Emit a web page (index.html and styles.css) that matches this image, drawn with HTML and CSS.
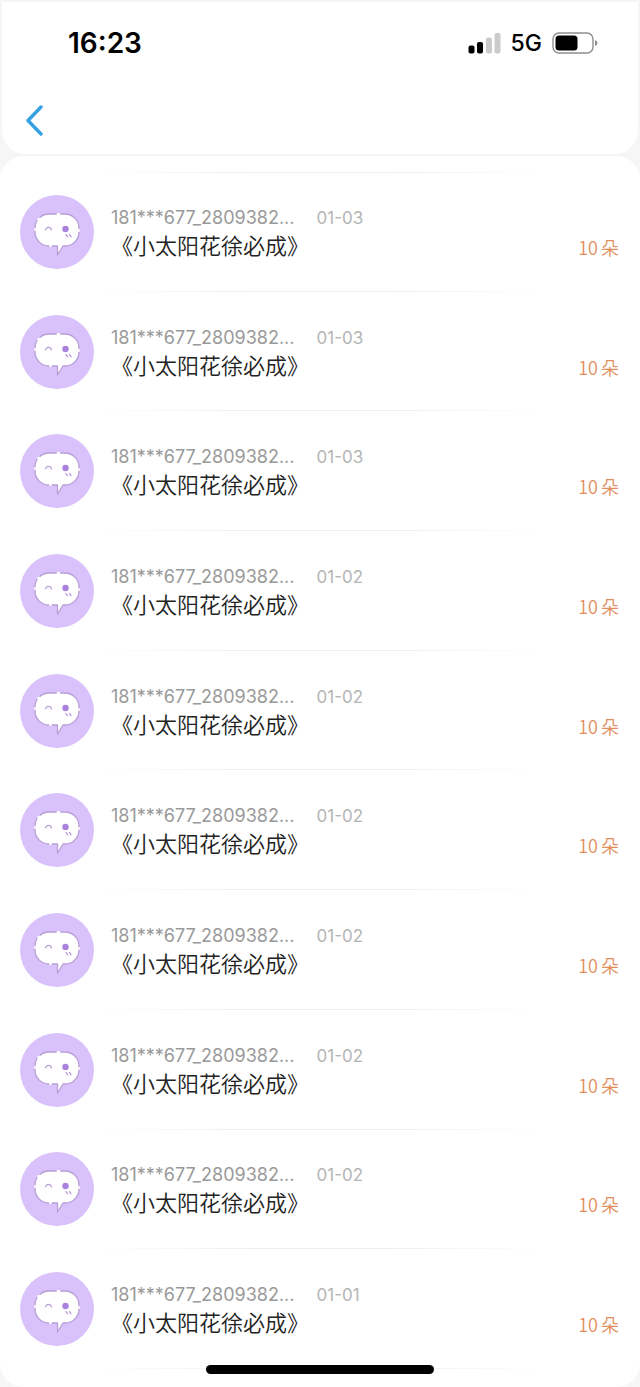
FILE: index.html
```html
<!DOCTYPE html>
<html lang="zh-CN">
<head>
<meta charset="utf-8">
<meta name="viewport" content="width=device-width, initial-scale=1">
<title>16:23</title>
<link rel="stylesheet" href="styles.css">
</head>
<body>
<svg class="defs" aria-hidden="true">
  <symbol id="avatar" viewBox="0 0 74 74">
    <circle cx="37" cy="37" r="37" fill="#d9c2fb"/>
    <path d="M29 19H45A14 14 0 0 1 59 33V37A14 14 0 0 1 45 51H43L37.500 60V51H29A14 14 0 0 1 15 37V33A14 14 0 0 1 29 19Z" fill="#fff" stroke="#b79fd6" stroke-width="1.300" stroke-linejoin="round"/>
    <path d="M37.500 19h2M59 35v1M31 51h-1M15 35v-1M18 24.500l1-1" fill="none" stroke="#fff" stroke-width="1.800" stroke-linecap="round"/>
    <path d="M25.500 35C26.500 31.500 30.500 31.500 31.500 35" fill="none" stroke="#b99fda" stroke-width="1.200" stroke-linecap="round"/>
    <circle cx="45.500" cy="34" r="3.200" fill="#aa82dc"/>
    <path d="M46 39.500l1.500 2.300M49.500 39.500l1.500 2.300" stroke="#aa82dc" stroke-width="1.100" stroke-linecap="round"/>
  </symbol>
</svg>
<div class="page">
  <header class="top">
    <div class="status">
      <time class="clock">16:23</time>
      <div class="indicators">
        <svg class="signal" width="33" height="21" viewBox="0 0 33 21" aria-hidden="true">
          <rect x="0.500" y="12.500" width="6" height="8" rx="2"/>
          <rect x="9" y="9" width="6" height="11.500" rx="2"/>
          <rect x="18" y="4.500" width="6" height="16" rx="2" fill="#cbcbcb"/>
          <rect x="26.500" y="0" width="6" height="20.500" rx="2" fill="#cbcbcb"/>
        </svg>
        <span class="network">5G</span>
        <svg class="battery" width="46" height="22" viewBox="0 0 46 22" aria-hidden="true">
          <rect x="1" y="1" width="40" height="20" rx="6" fill="none" stroke="#8e8e8e" stroke-width="1.400"/>
          <rect x="3.500" y="3.500" width="22" height="15" rx="3.500"/>
          <path d="M43 8Q45.500 9 45.500 11T43 14Z" fill="#8e8e8e"/>
        </svg>
      </div>
    </div>
    <nav class="nav">
      <button class="back" type="button" aria-label="返回">
        <svg width="20" height="32" viewBox="0 0 20 32" aria-hidden="true"><path d="M16 3L3 16.500L16 30" fill="none" stroke="#35a1e2" stroke-width="3.400" stroke-linecap="round" stroke-linejoin="round"/></svg>
      </button>
    </nav>
  </header>
  <main class="panel">
    <ul class="list">
      <li class="row"><svg class="avatar"><use href="#avatar"/></svg><div class="info"><div class="meta"><span class="name">181***677_2809382...</span><time class="date">01-03</time></div><div class="title">《小太阳花徐必成》</div></div><div class="count"><span>10</span><span>朵</span></div></li>
      <li class="row"><svg class="avatar"><use href="#avatar"/></svg><div class="info"><div class="meta"><span class="name">181***677_2809382...</span><time class="date">01-03</time></div><div class="title">《小太阳花徐必成》</div></div><div class="count"><span>10</span><span>朵</span></div></li>
      <li class="row"><svg class="avatar"><use href="#avatar"/></svg><div class="info"><div class="meta"><span class="name">181***677_2809382...</span><time class="date">01-03</time></div><div class="title">《小太阳花徐必成》</div></div><div class="count"><span>10</span><span>朵</span></div></li>
      <li class="row"><svg class="avatar"><use href="#avatar"/></svg><div class="info"><div class="meta"><span class="name">181***677_2809382...</span><time class="date">01-02</time></div><div class="title">《小太阳花徐必成》</div></div><div class="count"><span>10</span><span>朵</span></div></li>
      <li class="row"><svg class="avatar"><use href="#avatar"/></svg><div class="info"><div class="meta"><span class="name">181***677_2809382...</span><time class="date">01-02</time></div><div class="title">《小太阳花徐必成》</div></div><div class="count"><span>10</span><span>朵</span></div></li>
      <li class="row"><svg class="avatar"><use href="#avatar"/></svg><div class="info"><div class="meta"><span class="name">181***677_2809382...</span><time class="date">01-02</time></div><div class="title">《小太阳花徐必成》</div></div><div class="count"><span>10</span><span>朵</span></div></li>
      <li class="row"><svg class="avatar"><use href="#avatar"/></svg><div class="info"><div class="meta"><span class="name">181***677_2809382...</span><time class="date">01-02</time></div><div class="title">《小太阳花徐必成》</div></div><div class="count"><span>10</span><span>朵</span></div></li>
      <li class="row"><svg class="avatar"><use href="#avatar"/></svg><div class="info"><div class="meta"><span class="name">181***677_2809382...</span><time class="date">01-02</time></div><div class="title">《小太阳花徐必成》</div></div><div class="count"><span>10</span><span>朵</span></div></li>
      <li class="row"><svg class="avatar"><use href="#avatar"/></svg><div class="info"><div class="meta"><span class="name">181***677_2809382...</span><time class="date">01-02</time></div><div class="title">《小太阳花徐必成》</div></div><div class="count"><span>10</span><span>朵</span></div></li>
      <li class="row"><svg class="avatar"><use href="#avatar"/></svg><div class="info"><div class="meta"><span class="name">181***677_2809382...</span><time class="date">01-01</time></div><div class="title">《小太阳花徐必成》</div></div><div class="count"><span>10</span><span>朵</span></div></li>
    </ul>
  </main>
  <div class="home-bar"></div>
</div>
</body>
</html>
```
FILE: styles.css
```css
* { box-sizing: border-box; }
body {
  margin: 0;
  background: #f6f6f6;
  color: #222;
  font-family: Inter, "Noto Sans CJK SC", sans-serif;
}
.defs { position: absolute; width: 0; height: 0; }
.page {
  display: flex;
  flex-direction: column;
  gap: 2px;
  min-height: 100vh;
}
.top {
  margin: 2px 2px 0;
  padding-bottom: 10px;
  background: #fff;
  border-radius: 0 0 24px 24px;
}
.status {
  display: flex;
  align-items: center;
  justify-content: space-between;
  height: 82px;
  padding: 0 40px 0 66px;
}
.clock { color: #000; font-size: 28px; font-weight: 600; }
.indicators { display: flex; align-items: center; gap: 10px; }
.network { color: #000; font-size: 23px; font-weight: 500; line-height: 24px; }
.nav { display: flex; align-items: center; height: 60px; padding: 12px 21px 0; }
.back {
  display: flex;
  padding: 2px;
  border: 0;
  background: none;
  cursor: pointer;
}
.panel {
  display: flex;
  flex: 1;
  padding: 16px 0 18px;
  background: #fff;
  border-radius: 24px;
}
.list {
  display: grid;
  flex: 1;
  grid-auto-rows: 1fr;
  margin: 0;
  padding: 0;
  list-style: none;
  background: linear-gradient(90deg, #fff 15%, #eee 40%, #eee 60%, #fff 85%) top / 100% 1px no-repeat;
}
.row {
  display: flex;
  align-items: center;
  gap: 17px;
  padding: 0 21px 0 20px;
  background: linear-gradient(90deg, #fff 15%, #eee 40%, #eee 60%, #fff 85%) bottom / 100% 1px no-repeat;
}
.avatar { flex: none; width: 74px; height: 74px; }
.info { flex: 1; }
.meta { display: flex; align-items: center; gap: 22px; line-height: 28px; }
.name { color: #999; font-size: 18px; }
.date { color: #b5b5b5; font-size: 17px; }
.title { font-size: 22px; font-weight: 350; line-height: 28px; }
.count {
  display: flex;
  gap: 3px;
  padding-top: 30px;
  color: #e28e5c;
  font-family: "Noto Sans CJK SC", sans-serif;
  font-size: 18px;
  font-weight: 350;
  line-height: 28px;
}
.home-bar {
  position: fixed;
  bottom: 13px;
  left: 50%;
  width: 228px;
  height: 9px;
  margin-left: -114px;
  border-radius: 5px;
  background: #000;
}
```
